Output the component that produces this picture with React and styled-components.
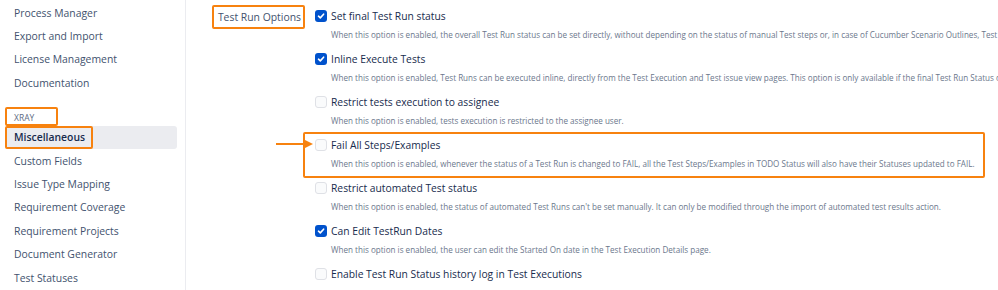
import React from "react";
import styled, { createGlobalStyle } from "styled-components";

const GlobalStyle = createGlobalStyle`
  html, body {
    margin: 0;
    padding: 0;
    background: #fff;
    font-family: "Open Sans", "Noto Sans", sans-serif;
  }
`;

const ORANGE = "#f7820f";

const Page = styled.div`
  display: flex;
  width: 998px;
  height: 290px;
  overflow: hidden;
  white-space: nowrap;
`;

const Sidebar = styled.nav`
  flex: 0 0 186px;
  width: 186px;
  padding: 1px 8px 0 5px;
  border-right: 1px solid #ebecf0;
  box-sizing: border-box;
`;

const NavItem = styled.div`
  display: flex;
  align-items: center;
  height: 23.4px;
  padding-left: 9px;
  border-radius: 3px;
  font-size: 10.4px;
  color: ${(p) => (p.active ? "#172b4d" : "#42526e")};
  font-weight: ${(p) => (p.active ? 600 : 400)};
  background: ${(p) => (p.active ? "#ebecf0" : "transparent")};
`;

const Marked = styled.span`
  display: flex;
  align-items: center;
  align-self: stretch;
  margin-left: -9px;
  padding: 0 6px 0 7px;
  border: 2px solid ${ORANGE};
  border-radius: 2px;
`;

const SectionHead = styled.div`
  display: flex;
  margin-top: 12px;
  height: 19px;
`;

const HeadText = styled.span`
  display: flex;
  align-items: center;
  width: 53px;
  box-sizing: border-box;
  padding: 3px 0 0 7px;
  border: 2px solid ${ORANGE};
  border-radius: 2px;
  font-size: 8.5px;
  color: #5e6c84;
`;

const Main = styled.section`
  display: flex;
  align-items: flex-start;
  padding-left: 26px;
  flex: 1;
  min-width: 0;
`;

const GroupLabel = styled.div`
  flex: 0 0 auto;
  margin-top: 5px;
  height: 24px;
  width: 93px;
  box-sizing: border-box;
  border: 2.5px solid ${ORANGE};
  border-radius: 2px;
  display: flex;
  align-items: center;
  justify-content: flex-end;
  padding-right: 2px;
  font-size: 10.4px;
  color: #42526e;
`;

const Options = styled.div`
  margin-left: 10px;
  display: flex;
  flex-direction: column;
  width: 683px;
`;

const Option = styled.div`
  position: relative;
  height: 43px;
  padding-top: 6px;
  box-sizing: border-box;

  ${(p) =>
    p.highlight &&
    `
    &::before {
      content: "";
      position: absolute;
      top: 3px;
      left: -12px;
      width: 682px;
      height: 46px;
      box-sizing: border-box;
      border: 2.5px solid ${ORANGE};
      border-radius: 2px;
      pointer-events: none;
    }
  `}
`;

const Arrow = styled.svg`
  position: absolute;
  left: -39px;
  top: 10px;
`;

const TitleRow = styled.label`
  display: flex;
  align-items: center;
  gap: 4px;
  height: 20px;
  font-size: 10.3px;
  color: #172b4d;
`;

const Box = styled.span`
  flex: 0 0 auto;
  width: 12px;
  height: 12px;
  box-sizing: border-box;
  border-radius: 3px;
  display: flex;
  align-items: center;
  justify-content: center;
  background: ${(p) => (p.checked ? "#0052cc" : "#fafbfc")};
  border: ${(p) => (p.checked ? "none" : "1.5px solid #dfe1e6")};
`;

const Desc = styled.div`
  margin-top: 1px;
  margin-left: 16px;
  height: 16px;
  line-height: 16px;
  font-size: 8.1px;
  color: #6b778c;
`;

const Check = () => (
  <svg width="8" height="8" viewBox="0 0 8 8">
    <path d="M1.5 4.2 L3.3 5.9 L6.6 2.2" fill="none" stroke="#fff" strokeWidth="1.6" strokeLinecap="round" strokeLinejoin="round" />
  </svg>
);

const navTop = ["Process Manager", "Export and Import", "License Management", "Documentation"];
const navBottom = [
  "Custom Fields",
  "Issue Type Mapping",
  "Requirement Coverage",
  "Requirement Projects",
  "Document Generator",
  "Test Statuses",
];

const options = [
  {
    title: "Set final Test Run status",
    checked: true,
    desc: "When this option is enabled, the overall Test Run status can be set directly, without depending on the status of manual Test steps or, in case of Cucumber Scenario Outlines, Test examples.",
  },
  {
    title: "Inline Execute Tests",
    checked: true,
    desc: "When this option is enabled, Test Runs can be executed inline, directly from the Test Execution and Test issue view pages. This option is only available if the final Test Run Status option is enabled.",
  },
  {
    title: "Restrict tests execution to assignee",
    checked: false,
    desc: "When this option is enabled, tests execution is restricted to the assignee user.",
  },
  {
    title: "Fail All Steps/Examples",
    checked: false,
    highlight: true,
    desc: "When this option is enabled, whenever the status of a Test Run is changed to FAIL, all the Test Steps/Examples in TODO Status will also have their Statuses updated to FAIL.",
  },
  {
    title: "Restrict automated Test status",
    checked: false,
    desc: "When this option is enabled, the status of automated Test Runs can't be set manually. It can only be modified through the import of automated test results action.",
  },
  {
    title: "Can Edit TestRun Dates",
    checked: true,
    desc: "When this option is enabled, the user can edit the Started On date in the Test Execution Details page.",
  },
  {
    title: "Enable Test Run Status history log in Test Executions",
    checked: false,
  },
];

export default function App() {
  return (
    <>
      <GlobalStyle />
      <Page>
        <Sidebar>
          {navTop.map((n) => (
            <NavItem key={n}>{n}</NavItem>
          ))}
          <SectionHead>
            <HeadText>XRAY</HeadText>
          </SectionHead>
          <NavItem active>
            <Marked>Miscellaneous</Marked>
          </NavItem>
          {navBottom.map((n) => (
            <NavItem key={n}>{n}</NavItem>
          ))}
        </Sidebar>
        <Main>
          <GroupLabel>Test Run Options</GroupLabel>
          <Options>
            {options.map((o) => (
              <Option key={o.title} highlight={o.highlight}>
                {o.highlight && (
                  <Arrow width="38" height="10" viewBox="0 0 38 10">
                    <line x1="0" y1="5" x2="31" y2="5" stroke={ORANGE} strokeWidth="2" />
                    <path d="M29 1 L37 5 L29 9 Z" fill={ORANGE} />
                  </Arrow>
                )}
                <TitleRow>
                  <Box checked={o.checked}>{o.checked && <Check />}</Box>
                  {o.title}
                </TitleRow>
                {o.desc && <Desc>{o.desc}</Desc>}
              </Option>
            ))}
          </Options>
        </Main>
      </Page>
    </>
  );
}
